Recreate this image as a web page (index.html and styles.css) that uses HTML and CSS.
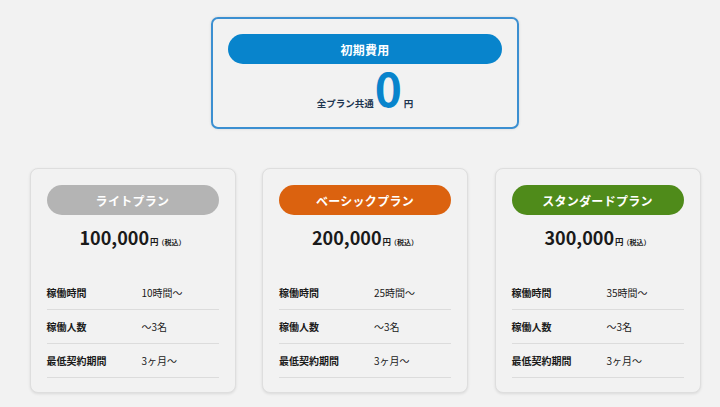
FILE: index.html
```html
<!DOCTYPE html>
<html lang="ja">
<head>
<meta charset="utf-8">
<link rel="stylesheet" href="styles.css">
</head>
<body>
<main class="page">
  <section class="initial">
    <div class="initial-box">
      <div class="pill pill-blue">初期費用</div>
      <div class="initial-price">
        <span class="initial-label">全プラン共通</span><span class="zero">0</span><span class="initial-yen">円</span>
      </div>
    </div>
  </section>
  <section class="plans">
    <div class="card">
      <div class="pill pill-gray">ライトプラン</div>
      <div class="price"><span class="amount">100,000</span><span class="yen">円</span><span class="tax">（税込）</span></div>
      <dl class="rows">
        <div class="row"><dt>稼働時間</dt><dd>10時間〜</dd></div>
        <div class="row"><dt>稼働人数</dt><dd>〜3名</dd></div>
        <div class="row"><dt>最低契約期間</dt><dd>3ヶ月〜</dd></div>
      </dl>
    </div>
    <div class="card">
      <div class="pill pill-orange">ベーシックプラン</div>
      <div class="price"><span class="amount">200,000</span><span class="yen">円</span><span class="tax">（税込）</span></div>
      <dl class="rows">
        <div class="row"><dt>稼働時間</dt><dd>25時間〜</dd></div>
        <div class="row"><dt>稼働人数</dt><dd>〜3名</dd></div>
        <div class="row"><dt>最低契約期間</dt><dd>3ヶ月〜</dd></div>
      </dl>
    </div>
    <div class="card">
      <div class="pill pill-green">スタンダードプラン</div>
      <div class="price"><span class="amount">300,000</span><span class="yen">円</span><span class="tax">（税込）</span></div>
      <dl class="rows">
        <div class="row"><dt>稼働時間</dt><dd>35時間〜</dd></div>
        <div class="row"><dt>稼働人数</dt><dd>〜3名</dd></div>
        <div class="row"><dt>最低契約期間</dt><dd>3ヶ月〜</dd></div>
      </dl>
    </div>
  </section>
</main>
</body>
</html>
```
FILE: styles.css
```css
* { box-sizing: border-box; }
html, body { margin: 0; padding: 0; }
body {
  background: #f2f2f2;
  font-family: "Noto Sans CJK JP", "Noto Sans", sans-serif;
  color: #1a1a1a;
  width: 720px;
  height: 407px;
  overflow: hidden;
}
.page { padding-left: 10px; }
.initial {
  display: flex;
  justify-content: center;
  padding-top: 17px;
}
.initial-box {
  width: 308px;
  height: 112px;
  border: 2px solid #3b8fd1;
  border-radius: 7px;
  padding: 15px 15px 0;
  box-shadow: 0 0 3px rgba(0,0,0,0.12);
}
.pill {
  height: 30px;
  border-radius: 15px;
  color: #fff;
  font-weight: 700;
  font-size: 12px;
  display: flex;
  align-items: center;
  justify-content: center;
  letter-spacing: 0.3px;
}
.pill-blue { background: #0884cc; }
.pill-gray { background: #b4b4b4; }
.pill-orange { background: #db620f; }
.pill-green { background: #4f8b1a; }
.initial-price {
  display: flex;
  justify-content: center;
  align-items: baseline;
  margin-top: 0;
  height: 46px;
  line-height: 46px;
}
.initial-label {
  font-size: 9.5px;
  font-weight: 700;
  color: #1d3550;
}
.zero {
  font-size: 46px;
  font-weight: 700;
  color: #0884cc;
  margin: 0 2px 0 1px;
}
.initial-yen {
  font-size: 9.5px;
  font-weight: 700;
  color: #1d3550;
}
.plans {
  display: flex;
  justify-content: center;
  gap: 26.5px;
  margin-top: 39px;
}
.card {
  width: 206px;
  height: 225px;
  background: #f2f2f2;
  border: 1px solid #dedede;
  border-radius: 8px;
  padding: 16px 16px 14px;
  box-shadow: 0 1px 3px rgba(0,0,0,0.10);
}
.price {
  margin-top: 8px;
  height: 28px;
  line-height: 28px;
  display: flex;
  justify-content: center;
  align-items: baseline;
  font-weight: 700;
}
.amount { font-size: 18px; }
.yen { font-size: 8.5px; margin-left: 1px; }
.tax { font-size: 7px; margin-left: -1px; }
.rows {
  margin: 25px 0 0;
  padding: 0;
}
.row {
  display: grid;
  grid-template-columns: 95px 1fr;
  height: 34px;
  align-items: center;
  border-bottom: 1px solid #dcdcdc;
  font-size: 10px;
}
.row dt { font-weight: 700; }
.row dd { margin: 0; }
```
